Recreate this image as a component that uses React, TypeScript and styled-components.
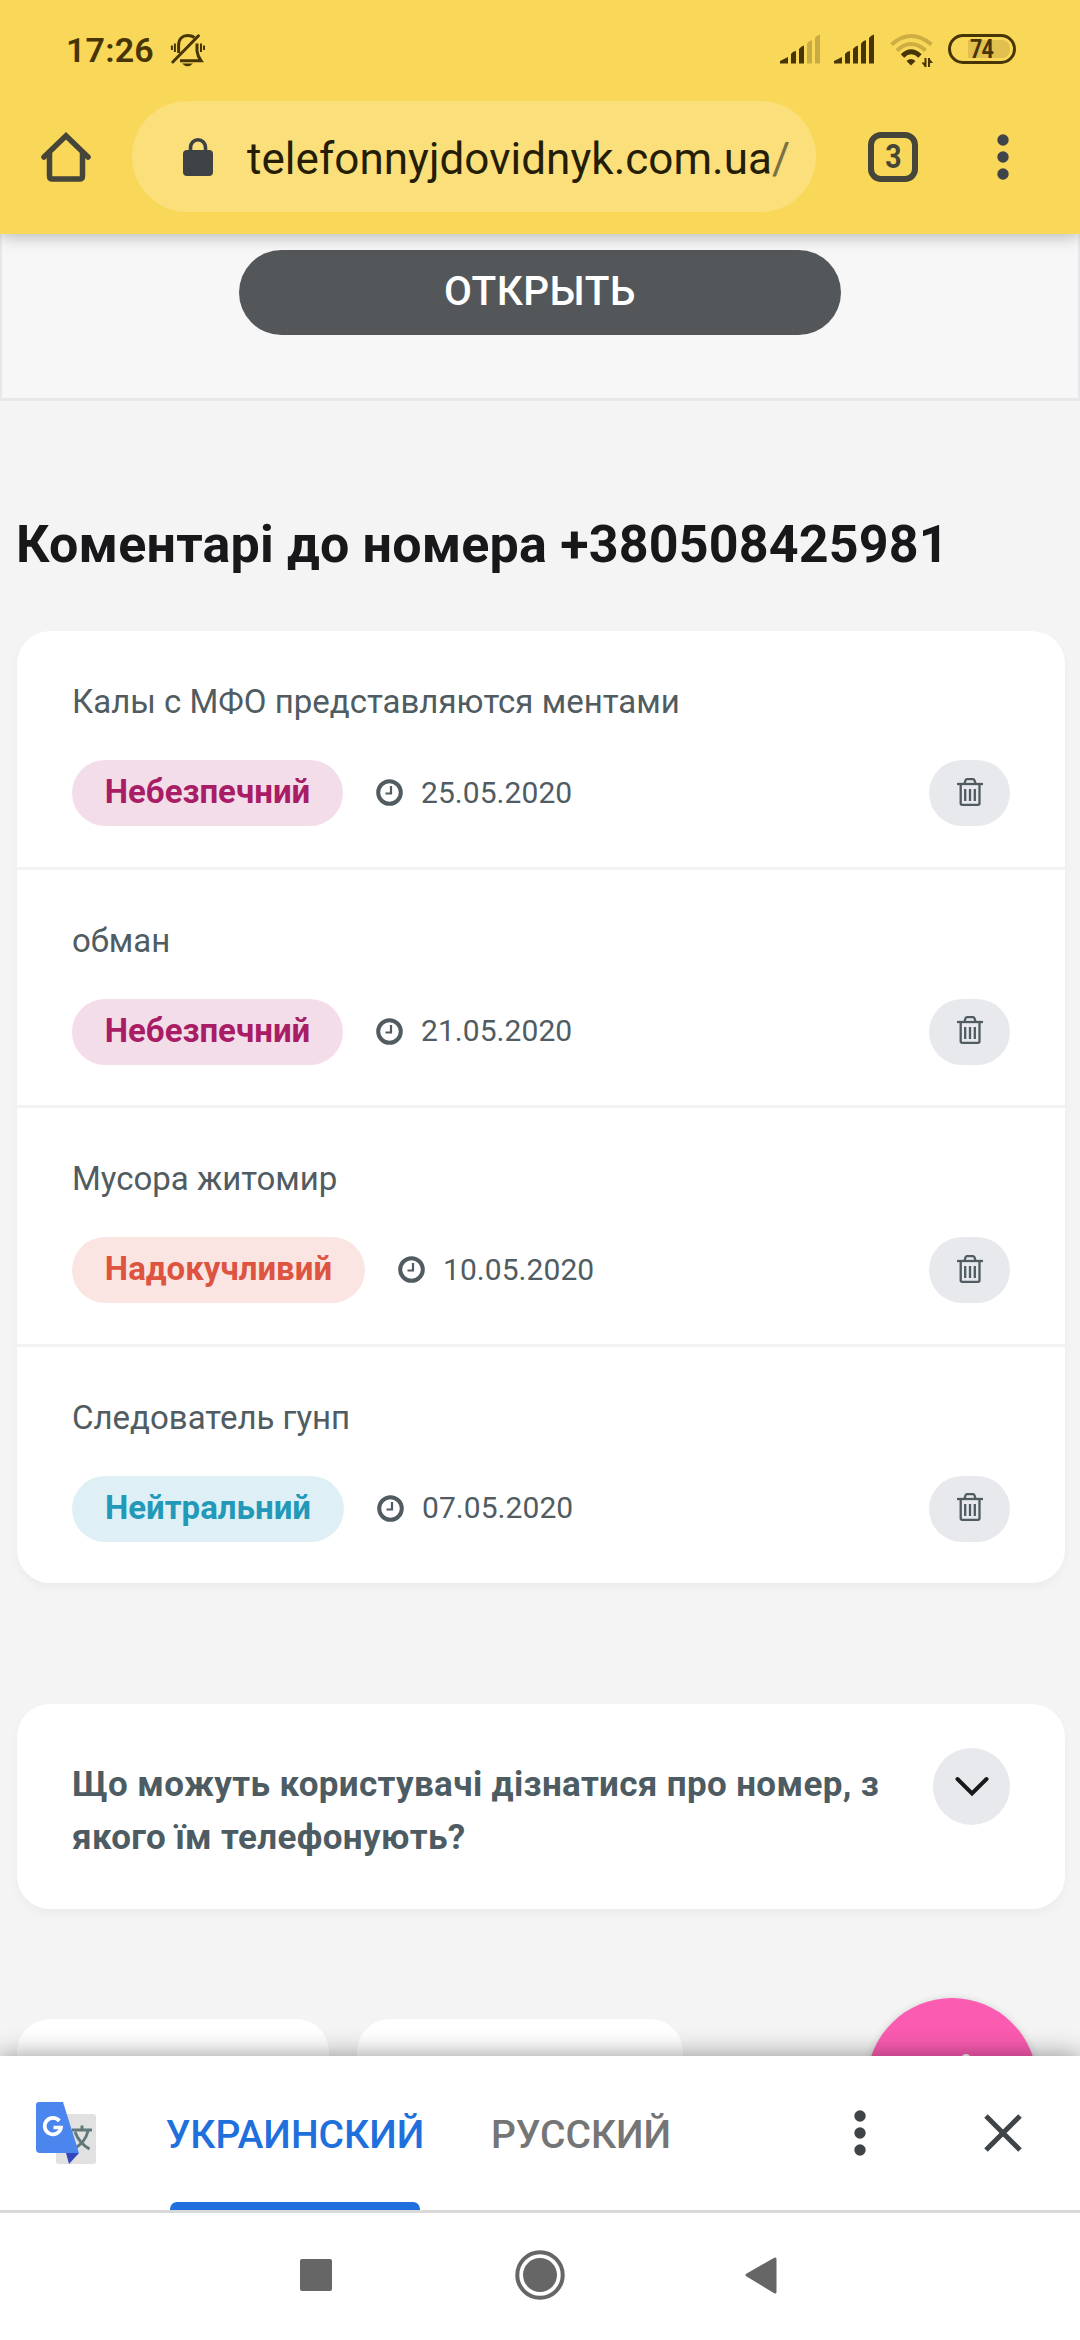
import React from "react";
import styled, { createGlobalStyle } from "styled-components";

const Global = createGlobalStyle`
  * { box-sizing: border-box; }
  body { margin: 0; background: #f4f4f5; font-family: Roboto, "Noto Sans", sans-serif; }
  button { font-family: inherit; border: 0; padding: 0; margin: 0; }
  svg { display: block; flex: none; overflow: visible; }
`;

const Screen = styled.div`
  width: 1080px;
  height: 2340px;
  display: flex;
  flex-direction: column;
  overflow: hidden;
  background: #f4f4f5;
`;

const TopBar = styled.header`
  flex: none;
  height: 234px;
  background: #f9d759;
  box-shadow: 0 2px 16px rgba(0, 0, 0, 0.28);
  position: relative;
  z-index: 2;
`;

const StatusBar = styled.div`
  height: 101px;
  padding: 0 64px 0 66px;
  display: flex;
  align-items: flex-start;
  color: #473505;
`;

const Time = styled.div`
  width: 105px;
  margin-top: 30px;
  font-size: 34px;
  line-height: 40px;
  font-weight: 600;
  letter-spacing: 0.2px;
  white-space: nowrap;
`;

const BellSlot = styled.div`
  margin-top: 34px;
`;

const StatusIcons = styled.div`
  margin-left: auto;
  margin-top: 34px;
  display: flex;
  align-items: flex-start;
`;

const Slot = styled.div<{ $w: number }>`
  width: ${(p) => p.$w}px;
`;

const Battery = styled.div`
  width: 68px;
  height: 30px;
  border: 3px solid #473505;
  border-radius: 15px;
  padding: 3px 3px;
  display: flex;
`;

const BatteryLevel = styled.div`
  width: 42px;
  height: 18px;
  margin-left: 14px;
  padding-left: 2px;
  border-radius: 0 8px 8px 0;
  background: #e2c04f;
  font-size: 25px;
  line-height: 19px;
  font-weight: 700;
  letter-spacing: -1px;
`;

const Condensed = styled.span`
  display: inline-block;
  transform: scaleX(0.86);
  transform-origin: left center;
`;

const CondensedCentered = styled(Condensed)`
  transform-origin: center;
`;

const Toolbar = styled.div`
  height: 111px;
  display: flex;
  align-items: center;
  padding-left: 41px;
`;

const Address = styled.div`
  width: 684px;
  height: 111px;
  margin-left: 41px;
  padding-left: 51px;
  border-radius: 56px;
  background: #fadf7b;
  display: flex;
  align-items: center;
`;

const Url = styled.div`
  margin-left: 34px;
  padding-top: 4px;
  font-size: 44px;
  line-height: 52px;
  letter-spacing: 0.04px;
  color: #251d06;
  white-space: nowrap;
`;

const Slash = styled.span`
  color: #7b6f45;
`;

const TabCount = styled.button`
  width: 50px;
  height: 50px;
  margin-left: 52px;
  border: 6px solid #45453a;
  border-radius: 13px;
  background: transparent;
  color: #45453a;
  font-size: 33px;
  line-height: 38px;
  font-weight: 700;
`;

const MenuSlot = styled.div<{ $ml: number }>`
  margin-left: ${(p) => p.$ml}px;
`;

const Page = styled.main`
  flex: none;
  height: 1822px;
  overflow: hidden;
  position: relative;
  display: flex;
  flex-direction: column;
`;

const AdFrame = styled.section`
  height: 167px;
  flex: none;
  padding-top: 16px;
  border: solid #e8e8ea;
  border-width: 0 2px 3px 2px;
  background: #f7f7f8;
  display: flex;
  justify-content: center;
  align-items: flex-start;
`;

const OpenButton = styled.button`
  width: 602px;
  height: 85px;
  border-radius: 43px;
  background: #54575a;
  color: #fff;
  font-size: 40.5px;
  letter-spacing: 0.5px;
  line-height: 85px;
  padding-bottom: 3px;
  font-weight: 500;
  display: flex;
  align-items: center;
  justify-content: center;
`;

const Heading = styled.h1`
  flex: none;
  margin: 113px 0 0 16px;
  font-size: 52px;
  line-height: 62px;
  letter-spacing: 0.18px;
  font-weight: 700;
  color: #18181a;
  white-space: nowrap;
`;

const Card = styled.section<{ $mt: number }>`
  flex: none;
  width: 1048px;
  margin: ${(p) => p.$mt}px 0 0 17px;
  border-radius: 33px;
  background: #fff;
  box-shadow: 0 5px 10px rgba(0, 0, 0, 0.035);
`;

const Row = styled.article`
  height: 238.67px;
  padding: 51px 55px 0 55px;
  border-bottom: 3px solid #f2f2f3;
  &:last-child {
    height: 236px;
    border-bottom: 0;
  }
`;

const Comment = styled.p`
  margin: 0;
  height: 78px;
  font-size: 33px;
  line-height: 40px;
  color: #505c61;
`;

const Meta = styled.div`
  height: 66px;
  display: flex;
  align-items: center;
`;

const tones = {
  danger: ["#f3dde9", "#a81d66"],
  annoying: ["#fbe5e2", "#dd5440"],
  neutral: ["#def0f5", "#2299b8"],
};

const Badge = styled.span<{ $tone: keyof typeof tones; $w: number }>`
  width: ${(p) => p.$w}px;
  height: 66px;
  padding-bottom: 3px;
  border-radius: 33px;
  display: flex;
  align-items: center;
  justify-content: center;
  background: ${(p) => tones[p.$tone][0]};
  color: ${(p) => tones[p.$tone][1]};
  font-size: 33px;
  font-weight: 700;
  white-space: nowrap;
`;

const DateGroup = styled.span`
  margin-left: 33px;
  padding-bottom: 1px;
  display: flex;
  align-items: center;
  gap: 18px;
  color: #505c61;
  font-size: 30px;
  letter-spacing: 0.05px;
  line-height: 36px;
`;

const Delete = styled.button`
  width: 81px;
  height: 66px;
  margin-left: auto;
  padding-bottom: 3px;
  border-radius: 33px;
  background: #e8e9ec;
  display: flex;
  align-items: center;
  justify-content: center;
`;

const Faq = styled(Card)`
  height: 205px;
  padding: 44px 55px 0 55px;
  display: flex;
  align-items: flex-start;
  justify-content: space-between;
`;

const Question = styled.h2`
  margin: 10px 0 0;
  width: 830px;
  font-size: 35px;
  letter-spacing: 0.35px;
  line-height: 53px;
  font-weight: 700;
  color: #4d5b62;
`;

const Toggle = styled.button`
  width: 77px;
  height: 77px;
  border-radius: 50%;
  background: #e8e9ec;
  display: flex;
  align-items: center;
  justify-content: center;
`;

const Tiles = styled.div`
  flex: none;
  margin: 110px 0 0 17px;
  display: flex;
  gap: 28px;
`;

const Tile = styled.div<{ $w: number }>`
  width: ${(p) => p.$w}px;
  height: 120px;
  border-radius: 33px;
  background: #fff;
`;

const Fab = styled.button`
  position: absolute;
  left: 867px;
  top: 1764px;
  width: 170px;
  height: 170px;
  border-radius: 50%;
  background: #fb5bb0;
  box-shadow: 0 2px 8px rgba(0, 0, 0, 0.2);
  display: flex;
  justify-content: center;
  padding: 56px 0 0 27px;
`;

const FabDot = styled.span`
  width: 10px;
  height: 10px;
  border-radius: 50%;
  background: #fff;
`;

const TranslateBar = styled.section`
  flex: none;
  height: 157px;
  background: #fff;
  border-bottom: 3px solid #d9d9d9;
  box-shadow: 0 0 24px rgba(0, 0, 0, 0.42);
  position: relative;
  z-index: 2;
  display: flex;
  align-items: center;
  padding-left: 36px;
`;

const Language = styled.button<{ $active?: boolean; $w: number; $ml: number }>`
  width: ${(p) => p.$w}px;
  height: 154px;
  margin-left: ${(p) => p.$ml}px;
  background: transparent;
  display: flex;
  flex-direction: column;
  align-items: center;
  padding-top: 56px;
  justify-content: space-between;
  font-size: 39px;
  line-height: 46px;
  font-weight: 500;
  color: ${(p) => (p.$active ? "#1f70dc" : "#757575")};
  white-space: nowrap;
`;

const Indicator = styled.span`
  width: 250px;
  height: 8px;
  border-radius: 7px 7px 0 0;
  background: #1f70dc;
`;

const NavBar = styled.nav`
  flex: none;
  height: 127px;
  position: relative;
  z-index: 3;
  background: #fff;
  display: flex;
  align-items: center;
  padding: 0 0 3px 300px;
`;

const Dots = () => (
  <svg width="12" height="46" viewBox="0 0 12 46" fill="#3f4448">
    <circle cx="6" cy="6" r="5.7" />
    <circle cx="6" cy="23" r="5.7" />
    <circle cx="6" cy="40" r="5.7" />
  </svg>
);

const bars = [
  "M0 29.5V27L8 23V29.5Z",
  "M11 29.5V20Q13 17 16 17V29.5Z",
  "M19 29.5V15Q21 12 24 11.5V29.5Z",
  "M27 29.5V9.5Q29 6.500 32 6V29.5Z",
  "M35 29.5V4Q37 1 40 .5V29.5Z",
];

const Signal = ({ faded = 0 }: { faded?: number }) => (
  <svg width="40" height="30" viewBox="0 0 40 30" fill="currentColor">
    {bars.map((d, i) => (
      <path key={i} d={d} opacity={i >= 5 - faded ? 0.27 : 1} />
    ))}
  </svg>
);

const Wifi = () => (
  <svg width="43" height="34" viewBox="0 0 43 34" fill="none" stroke="currentColor">
    <path d="M1.500 10.500Q21 -6.500 41.500 10.500" strokeWidth="4" opacity=".25" />
    <path d="M7 16.500Q21 3.500 35.500 16.500" strokeWidth="4" opacity=".25" />
    <path d="M12.500 22Q21 13.500 30 22" strokeWidth="4.800" />
    <path d="M16.500 27Q21 23 25.500 27L21 31.500Z" fill="currentColor" stroke="none" />
    <path d="M35.500 24v9M39 24v9" strokeWidth="2" />
    <path d="M31.500 28.500h4v5zM39 24l4 5h-4z" fill="currentColor" stroke="none" />
  </svg>
);

const BellOff = () => (
  <svg width="34" height="33" viewBox="0 0 34 33" fill="none" stroke="currentColor" strokeWidth="3">
    <path d="M1.800 28L27.500 1.800" strokeWidth="3" strokeLinecap="round" />
    <path d="M7.600 19V11.500C7.600 4.500 12 1.500 16.500 1.500C19.500 1.500 21.500 2 23.500 3.500" />
    <path d="M26 9.500V17Q26.500 22 30 26.700H9" />
    <path d="M.9 11.500V16M3.900 9.500V18M30 9.500V18M33 11.500V16" strokeWidth="2" />
    <path d="M11 29.500H22Q16.500 35 11 29.500Z" fill="currentColor" stroke="none" />
  </svg>
);

const Home = () => (
  <svg width="50" height="50" viewBox="0 0 50 50" fill="none" stroke="#45453a" strokeWidth="5.500" strokeLinecap="round">
    <path d="M3 25L25 3.800L47 25" strokeLinejoin="miter" />
    <path d="M8.500 21V44Q8.500 47 11.500 47H38.500Q41.500 47 41.500 44V21" />
  </svg>
);

const Lock = () => (
  <svg width="30" height="38" viewBox="0 0 30 38">
    <rect y="12" width="30" height="26" rx="4" fill="#3f4245" />
    <path d="M7.500 14V9.500A7.500 7.700 0 0 1 22.500 9.500V14" fill="none" stroke="#3f4245" strokeWidth="3.600" />
  </svg>
);

const Clock = () => (
  <svg width="27" height="27" viewBox="0 0 27 27" fill="none" stroke="#505c61">
    <circle cx="13.500" cy="13.500" r="11.300" strokeWidth="4" />
    <path d="M15 7V14.500H9.500" strokeWidth="2.200" />
  </svg>
);

const Trash = () => (
  <svg width="26" height="28" viewBox="0 0 26 28" fill="none" stroke="#505c61" strokeWidth="2.300">
    <path d="M0 6H26" />
    <path d="M7.500 5.500L8.500 2.300Q9 1.200 10 1.200H16Q17 1.200 17.500 2.300L18.500 5.500" />
    <path d="M3.700 6V25.300Q3.700 26.800 5.200 26.800H21Q22.500 26.800 22.500 25.300V6" />
    <path d="M8.200 11V23M13 11V23M17.800 11V23" />
  </svg>
);

const TranslateLogo = () => (
  <svg width="61" height="62" viewBox="0 0 61 62">
    <rect x="20" y="12" width="40" height="50" rx="3" fill="#e1e1e2" />
    <path d="M36 28H56M46 23.500V28M39 30Q43 41 53.500 47M52 29Q49.500 40 38 47" fill="none" stroke="#607878" strokeWidth="2.900" />
    <path d="M30 51H43L33 62Z" fill="#3347bd" />
    <path d="M3 0H27L43 51H4Q0 51 0 47V3Q0 0 3 0Z" fill="#4b86ee" />
    <path d="M23.300 19A8.200 8.200 0 1 0 25 25.500H17.500" fill="none" stroke="#fff" strokeWidth="3.700" />
  </svg>
);

const comments: { text: string; label: string; tone: keyof typeof tones; width: number; date: string }[] = [
  { text: "Калы с МФО представляются ментами", label: "Небезпечний", tone: "danger", width: 271, date: "25.05.2020" },
  { text: "обман", label: "Небезпечний", tone: "danger", width: 271, date: "21.05.2020" },
  { text: "Мусора житомир", label: "Надокучливий", tone: "annoying", width: 293, date: "10.05.2020" },
  { text: "Следователь гунп", label: "Нейтральний", tone: "neutral", width: 272, date: "07.05.2020" },
];

export default function App() {
  return (
    <Screen>
      <Global />
      <TopBar>
        <StatusBar>
          <Time>17:26</Time>
          <BellSlot>
            <BellOff />
          </BellSlot>
          <StatusIcons>
            <Slot $w={54}>
              <Signal faded={2} />
            </Slot>
            <Slot $w={56}>
              <Signal />
            </Slot>
            <Slot $w={58}>
              <Wifi />
            </Slot>
            <Battery>
              <BatteryLevel>
                <Condensed>74</Condensed>
              </BatteryLevel>
            </Battery>
          </StatusIcons>
        </StatusBar>
        <Toolbar>
          <Home />
          <Address>
            <Lock />
            <Url>
              telefonnyjdovidnyk.com.ua<Slash>/</Slash>
            </Url>
          </Address>
          <TabCount>
            <CondensedCentered>3</CondensedCentered>
          </TabCount>
          <MenuSlot $ml={79}>
            <Dots />
          </MenuSlot>
        </Toolbar>
      </TopBar>
      <Page>
        <AdFrame>
          <OpenButton>ОТКРЫТЬ</OpenButton>
        </AdFrame>
        <Heading>Коментарі до номера +380508425981</Heading>
        <Card $mt={55}>
          {comments.map((c) => (
            <Row key={c.date}>
              <Comment>{c.text}</Comment>
              <Meta>
                <Badge $tone={c.tone} $w={c.width}>
                  {c.label}
                </Badge>
                <DateGroup>
                  <Clock />
                  {c.date}
                </DateGroup>
                <Delete>
                  <Trash />
                </Delete>
              </Meta>
            </Row>
          ))}
        </Card>
        <Faq $mt={121}>
          <Question>Що можуть користувачі дізнатися про номер, з якого їм телефонують?</Question>
          <Toggle>
            <svg width="34" height="20" viewBox="0 0 34 20" fill="none" stroke="#17191b" strokeWidth="4" strokeLinecap="round">
              <path d="M2.500 3L17 17.500L31.500 3" />
            </svg>
          </Toggle>
        </Faq>
        <Tiles>
          <Tile $w={312} />
          <Tile $w={326} />
        </Tiles>
        <Fab>
          <FabDot />
        </Fab>
      </Page>
      <TranslateBar>
        <TranslateLogo />
        <Language $active $w={258} $ml={69}>
          УКРАИНСКИЙ
          <Indicator />
        </Language>
        <Language $w={180} $ml={67}>
          РУССКИЙ
        </Language>
        <MenuSlot $ml={183}>
          <Dots />
        </MenuSlot>
        <MenuSlot $ml={118}>
          <svg width="38" height="40" viewBox="0 0 38 40" stroke="#3f4448" strokeWidth="5">
            <path d="M2 3L36 37M36 3L2 37" />
          </svg>
        </MenuSlot>
      </TranslateBar>
      <NavBar>
        <svg width="477" height="50" viewBox="0 0 477 50" fill="#666">
          <rect x="0" y="9" width="32" height="32" rx="2" />
          <circle cx="240" cy="25" r="22.700" fill="none" stroke="#666" strokeWidth="4" />
          <circle cx="240" cy="25" r="17" />
          <path d="M447 25L475 9V42Z" stroke="#666" strokeWidth="3" strokeLinejoin="round" />
        </svg>
      </NavBar>
    </Screen>
  );
}
